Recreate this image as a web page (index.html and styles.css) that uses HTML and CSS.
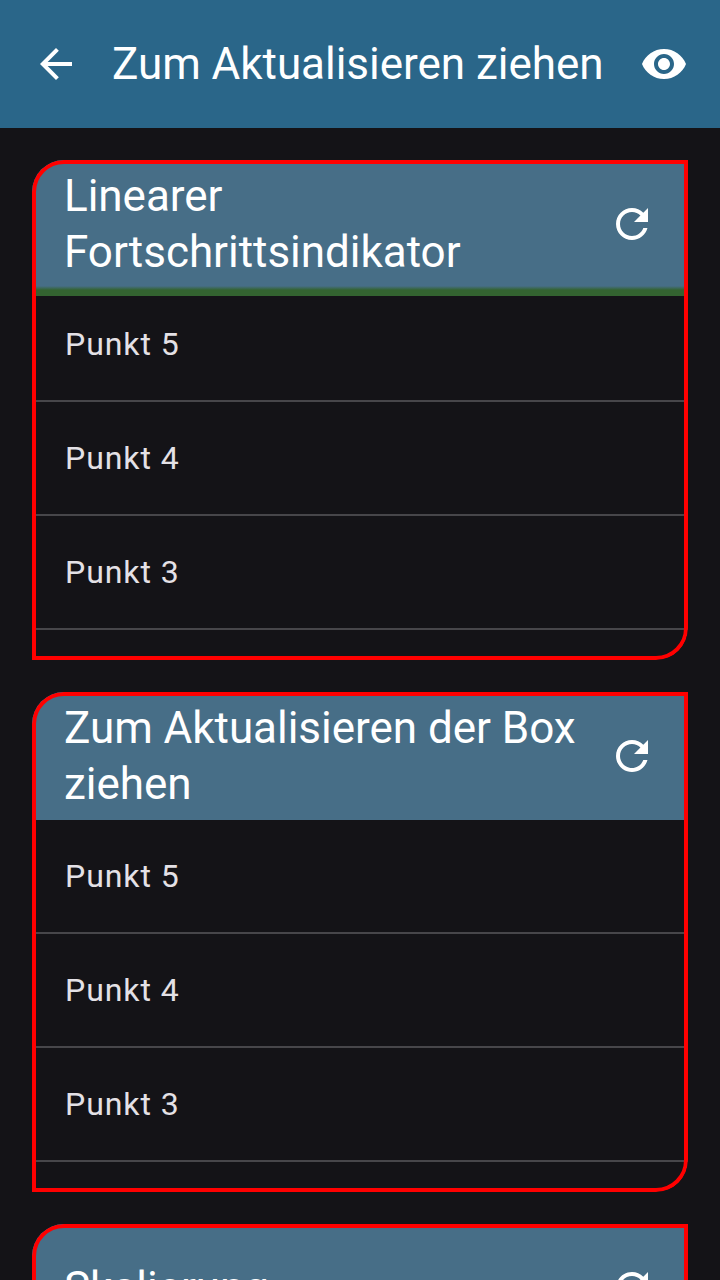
FILE: index.html
```html
<!DOCTYPE html>
<html lang="de">
<head>
<meta charset="utf-8">
<title>Zum Aktualisieren ziehen</title>
<link rel="stylesheet" href="styles.css">
</head>
<body>
<header class="app-bar">
  <svg class="icon" viewBox="0 0 24 24"><path d="M20 11H7.83l5.59-5.59L12 4l-8 8 8 8 1.41-1.41L7.83 13H20v-2z"/></svg>
  <h1 class="app-title">Zum Aktualisieren ziehen</h1>
  <svg class="icon" viewBox="0 0 24 24"><path d="M12 4.5C7 4.5 2.73 7.61 1 12c1.73 4.39 6 7.5 11 7.5s9.27-3.11 11-7.5c-1.73-4.39-6-7.5-11-7.5zM12 17c-2.76 0-5-2.24-5-5s2.24-5 5-5 5 2.24 5 5-2.24 5-5 5zm0-8c-1.66 0-3 1.34-3 3s1.34 3 3 3 3-1.34 3-3-1.34-3-3-3z"/></svg>
</header>
<main class="content">
  <section class="card">
    <div class="card-header with-progress">
      <h2 class="card-title">Linearer Fortschrittsindikator</h2>
      <svg class="icon" viewBox="0 0 24 24"><path d="M17.65 6.35C16.2 4.9 14.21 4 12 4c-4.42 0-7.99 3.58-7.99 8s3.57 8 7.99 8c3.73 0 6.84-2.55 7.73-6h-2.08c-.82 2.33-3.04 4-5.65 4-3.31 0-6-2.69-6-6s2.69-6 6-6c1.66 0 3.14.69 4.22 1.78L13 11h7V4l-2.35 2.35z"/></svg>
    </div>
    <ul class="list"><li>Punkt 5</li><li>Punkt 4</li><li>Punkt 3</li><li></li></ul>
  </section>
  <section class="card">
    <div class="card-header">
      <h2 class="card-title">Zum Aktualisieren der Box ziehen</h2>
      <svg class="icon" viewBox="0 0 24 24"><path d="M17.65 6.35C16.2 4.9 14.21 4 12 4c-4.42 0-7.99 3.58-7.99 8s3.57 8 7.99 8c3.73 0 6.84-2.55 7.73-6h-2.08c-.82 2.33-3.04 4-5.65 4-3.31 0-6-2.69-6-6s2.69-6 6-6c1.66 0 3.14.69 4.22 1.78L13 11h7V4l-2.35 2.35z"/></svg>
    </div>
    <ul class="list"><li>Punkt 5</li><li>Punkt 4</li><li>Punkt 3</li><li></li></ul>
  </section>
  <section class="card">
    <div class="card-header">
      <h2 class="card-title">Skalierung</h2>
      <svg class="icon" viewBox="0 0 24 24"><path d="M17.65 6.35C16.2 4.9 14.21 4 12 4c-4.42 0-7.99 3.58-7.99 8s3.57 8 7.99 8c3.73 0 6.84-2.55 7.73-6h-2.08c-.82 2.33-3.04 4-5.65 4-3.31 0-6-2.69-6-6s2.69-6 6-6c1.66 0 3.14.69 4.22 1.78L13 11h7V4l-2.35 2.35z"/></svg>
    </div>
  </section>
</main>
</body>
</html>
```
FILE: styles.css
```css
* { box-sizing: border-box; margin: 0; padding: 0; }
body { height: 1280px; overflow: hidden; display: flex; flex-direction: column; background: #141317; color: #fff; font-family: Roboto, sans-serif; }
.app-bar { height: 128px; flex: none; display: flex; align-items: center; padding: 0 32px; gap: 32px; background: #2a6689; }
.app-title { flex: 1; font-size: 44px; line-height: 56px; font-weight: 400; letter-spacing: -.03px; white-space: nowrap; }
.icon { width: 48px; height: 48px; flex: none; fill: #fff; }
.content { flex: 1; min-height: 0; overflow: hidden; display: flex; flex-direction: column; gap: 32px; padding: 32px 32px 0; }
.card { position: relative; height: 500px; flex: none; overflow: hidden; border-radius: 32px 0; }
.card::after { content: ""; position: absolute; inset: 0; border: 4px solid #f00; border-radius: inherit; }
.card-header { height: 128px; display: flex; align-items: center; justify-content: space-between; padding: 0 32px; background: #476e87; }
.card-title { width: 520px; font-size: 44px; line-height: 56px; font-weight: 400; letter-spacing: -.03px; }
.with-progress { position: relative; }
.with-progress::after { content: ""; position: absolute; left: 0; right: 0; top: 126px; height: 10px; background: linear-gradient(#476e87, #336330 40%); }
.list { list-style: none; }
.list li { height: 114px; padding: 0 33px; border-bottom: 2px solid #47464a; font-size: 32px; line-height: 112px; letter-spacing: .95px; color: #e4e1e6; }
```
